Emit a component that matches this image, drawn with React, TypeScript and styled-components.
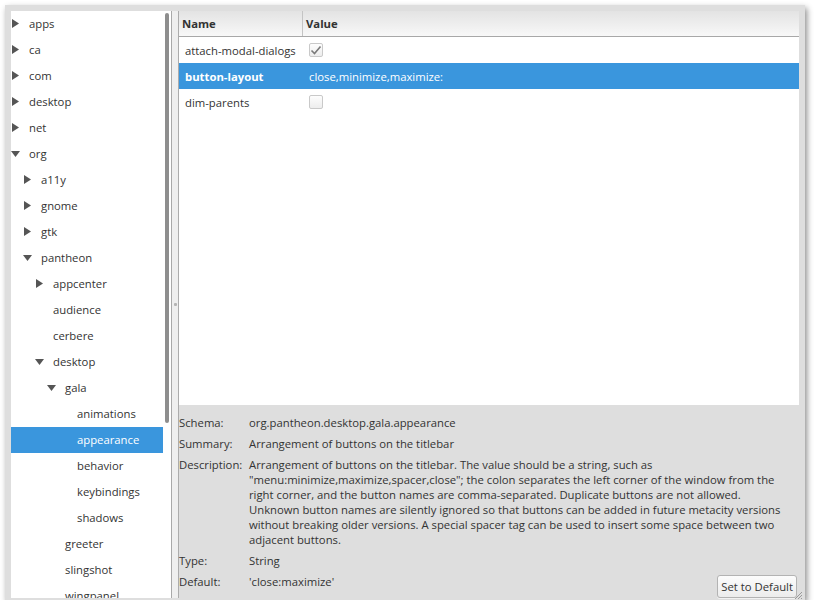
import React from 'react';
import styled, { createGlobalStyle } from 'styled-components';

type TreeNode = {
  label: string;
  level: number;
  arrow?: 'right' | 'down';
  selected?: boolean;
};

const tree: TreeNode[] = [
  { label: 'apps', level: 0, arrow: 'right' },
  { label: 'ca', level: 0, arrow: 'right' },
  { label: 'com', level: 0, arrow: 'right' },
  { label: 'desktop', level: 0, arrow: 'right' },
  { label: 'net', level: 0, arrow: 'right' },
  { label: 'org', level: 0, arrow: 'down' },
  { label: 'a11y', level: 1, arrow: 'right' },
  { label: 'gnome', level: 1, arrow: 'right' },
  { label: 'gtk', level: 1, arrow: 'right' },
  { label: 'pantheon', level: 1, arrow: 'down' },
  { label: 'appcenter', level: 2, arrow: 'right' },
  { label: 'audience', level: 2 },
  { label: 'cerbere', level: 2 },
  { label: 'desktop', level: 2, arrow: 'down' },
  { label: 'gala', level: 3, arrow: 'down' },
  { label: 'animations', level: 4 },
  { label: 'appearance', level: 4, selected: true },
  { label: 'behavior', level: 4 },
  { label: 'keybindings', level: 4 },
  { label: 'shadows', level: 4 },
  { label: 'greeter', level: 3 },
  { label: 'slingshot', level: 3 },
  { label: 'wingpanel', level: 3 },
];

const keys = [
  { name: 'attach-modal-dialogs', check: true },
  { name: 'button-layout', value: 'close,minimize,maximize:', selected: true },
  { name: 'dim-parents', check: false },
];

const description = [
  'Arrangement of buttons on the titlebar. The value should be a string, such as',
  '"menu:minimize,maximize,spacer,close"; the colon separates the left corner of the window from the',
  'right corner, and the button names are comma-separated. Duplicate buttons are not allowed.',
  'Unknown button names are silently ignored so that buttons can be added in future metacity versions',
  'without breaking older versions. A special spacer tag can be used to insert some space between two',
  'adjacent buttons.',
];

const GlobalStyle = createGlobalStyle`
  html, body { margin: 0; padding: 0; background: #fff; }
  body {
    font-family: 'Open Sans', 'Noto Sans', sans-serif;
    font-size: 11.3px;
    color: #333;
  }
`;

const Window = styled.div`
  position: relative;
  margin: 5px 0 0 5px;
  width: 800px;
  height: 595px;
  box-sizing: border-box;
  padding: 6px 6px 2px 6px;
  background: #dedede;
  box-shadow: 2px 3px 6px rgba(0, 0, 0, 0.45);
  display: flex;
`;

const LeftPane = styled.div`
  width: 161px;
  flex: none;
  box-sizing: border-box;
  border-right: 1px solid #a9a9a9;
  background: #fff;
  display: flex;
  overflow: hidden;
`;

const TreeList = styled.div`
  width: 152px;
  flex: none;
`;

const TreeRow = styled.div<{ $level: number; $selected?: boolean }>`
  height: 26px;
  box-sizing: border-box;
  padding-bottom: 1px;
  display: flex;
  align-items: center;
  padding-left: ${(p) => p.$level * 12}px;
  background: ${(p) => (p.$selected ? '#3a96dd' : 'transparent')};
  color: ${(p) => (p.$selected ? '#fff' : '#333')};
  white-space: nowrap;
`;

const Expander = styled.span`
  width: 9px;
  margin-right: 9px;
  display: flex;
  justify-content: center;
  align-items: center;
  flex: none;
`;

const ScrollTrack = styled.div`
  flex: 1;
  padding: 2px 2px 0 2px;
`;

const ScrollThumb = styled.div`
  width: 4px;
  height: 410px;
  border-radius: 2px;
  background: #8e8e8e;
`;

const Handle = styled.div`
  width: 6px;
  flex: none;
  background: #efefef;
  border-right: 1px solid #acacac;
  display: flex;
  align-items: center;
  justify-content: center;
`;

const HandleDot = styled.span`
  width: 3px;
  height: 3px;
  border-radius: 1px;
  background: #b4b4b4;
`;

const RightPane = styled.div`
  flex: 1;
  display: flex;
  flex-direction: column;
  min-width: 0;
`;

const Table = styled.div`
  flex: 1;
  background: #fff;
`;

const HeaderRow = styled.div`
  height: 25px;
  display: flex;
  background: linear-gradient(#e3e3e3, #f8f8f8);
  border-bottom: 1px solid #a8a8a8;
  font-weight: 700;
  color: #333;
`;

const HeaderCell = styled.div<{ $first?: boolean }>`
  width: ${(p) => (p.$first ? '124px' : 'auto')};
  flex: ${(p) => (p.$first ? 'none' : '1')};
  box-sizing: border-box;
  padding-left: 3px;
  display: flex;
  align-items: center;
  border-right: ${(p) => (p.$first ? '1px solid #c4c4c4' : 'none')};
`;

const KeyRow = styled.div<{ $selected?: boolean }>`
  height: 26px;
  display: flex;
  align-items: center;
  background: ${(p) => (p.$selected ? '#3a96dd' : 'transparent')};
  color: ${(p) => (p.$selected ? '#fff' : '#333')};
`;

const NameCell = styled.div<{ $bold?: boolean }>`
  width: 124px;
  flex: none;
  box-sizing: border-box;
  padding-left: 6px;
  font-weight: ${(p) => (p.$bold ? 700 : 400)};
  white-space: nowrap;
`;

const ValueCell = styled.div`
  flex: 1;
  padding-left: 6px;
  display: flex;
  align-items: center;
  white-space: nowrap;
`;

const CheckBox = styled.span`
  width: 14px;
  height: 14px;
  box-sizing: border-box;
  border: 1px solid #c9c9c9;
  border-radius: 2px;
  background: linear-gradient(#fdfdfd, #ededed);
  display: flex;
  align-items: center;
  justify-content: center;
`;

const InfoPanel = styled.div`
  background: #dedede;
  padding: 10px 2px 0 0;
  display: grid;
  grid-template-columns: 70px 1fr auto;
  row-gap: 6px;
  line-height: 15px;
  color: #333;
`;

const Label = styled.div`
  grid-column: 1;
  align-self: start;
  white-space: nowrap;
`;

const Value = styled.div<{ $wide?: boolean }>`
  grid-column: ${(p) => (p.$wide ? '2 / 4' : '2')};
  align-self: start;
  white-space: nowrap;
`;

const Button = styled.button`
  grid-column: 3;
  height: 23px;
  margin-top: 1px;
  padding: 0 3px;
  border: 1px solid #b3b3b3;
  border-radius: 3px;
  background: linear-gradient(#fcfcfc, #ececec);
  font-family: inherit;
  font-size: inherit;
  color: #333;
  box-shadow: 0 1px 0 rgba(255, 255, 255, 0.6);
`;

const Grip = styled.svg`
  position: absolute;
  right: 2px;
  bottom: 0;
`;

const RightArrow = () => (
  <svg width="7" height="9" viewBox="0 0 7 9">
    <polygon points="0,0 7,4.5 0,9" fill="#555" />
  </svg>
);

const DownArrow = () => (
  <svg width="9" height="6" viewBox="0 0 9 6">
    <polygon points="0,0 9,0 4.5,6" fill="#555" />
  </svg>
);

const Check = () => (
  <svg width="12" height="10" viewBox="0 0 12 10">
    <path d="M1.5 5.5 L4.5 8.5 L10.5 1.5" fill="none" stroke="#7a7a7a" strokeWidth="1.6" />
  </svg>
);

const App: React.FC = () => (
  <>
    <GlobalStyle />
    <Window>
      <LeftPane>
        <TreeList>
          {tree.map((n, i) => (
            <TreeRow key={i} $level={n.level} $selected={n.selected}>
              <Expander>
                {n.arrow === 'right' && <RightArrow />}
                {n.arrow === 'down' && <DownArrow />}
              </Expander>
              {n.label}
            </TreeRow>
          ))}
        </TreeList>
        <ScrollTrack>
          <ScrollThumb />
        </ScrollTrack>
      </LeftPane>
      <Handle>
        <HandleDot />
      </Handle>
      <RightPane>
        <Table>
          <HeaderRow>
            <HeaderCell $first>Name</HeaderCell>
            <HeaderCell>Value</HeaderCell>
          </HeaderRow>
          {keys.map((k) => (
            <KeyRow key={k.name} $selected={k.selected}>
              <NameCell $bold={k.selected}>{k.name}</NameCell>
              <ValueCell>
                {k.value !== undefined ? k.value : <CheckBox>{k.check && <Check />}</CheckBox>}
              </ValueCell>
            </KeyRow>
          ))}
        </Table>
        <InfoPanel>
          <Label>Schema:</Label>
          <Value $wide>org.pantheon.desktop.gala.appearance</Value>
          <Label>Summary:</Label>
          <Value $wide>Arrangement of buttons on the titlebar</Value>
          <Label>Description:</Label>
          <Value $wide>
            {description.map((line, i) => (
              <div key={i}>{line}</div>
            ))}
          </Value>
          <Label>Type:</Label>
          <Value $wide>String</Value>
          <Label>Default:</Label>
          <Value>'close:maximize'</Value>
          <Button>Set to Default</Button>
        </InfoPanel>
      </RightPane>
      <Grip width="10" height="10" viewBox="0 0 10 10">
        <path d="M9 2 L2 9 M9 5 L5 9 M9 8 L8 9" stroke="#9a9a9a" strokeWidth="1" />
      </Grip>
    </Window>
  </>
);

export default App;
